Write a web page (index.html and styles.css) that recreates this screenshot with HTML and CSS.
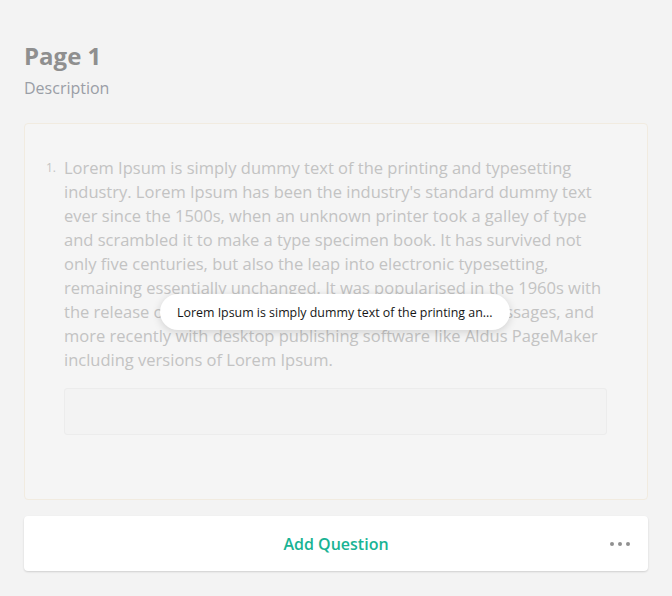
FILE: index.html
```html
<!DOCTYPE html>
<html>
<head>
<meta charset="utf-8">
<link rel="stylesheet" href="styles.css">
</head>
<body>
<div class="page">
  <div class="header">
    <h1 class="title">Page 1</h1>
    <div class="desc">Description</div>
  </div>
  <div class="panel">
    <div class="question">
      <span class="num">1.</span>
      <div class="qbody">
        <div class="qtext">Lorem Ipsum is simply dummy text of the printing and typesetting industry. Lorem Ipsum has been the industry's standard dummy text ever since the 1500s, when an unknown printer took a galley of type and scrambled it to make a type specimen book. It has survived not only five centuries, but also the leap into electronic typesetting, remaining essentially unchanged. It was popularised in the 1960s with the release of Letraset sheets containing Lorem Ipsum passages, and more recently with desktop publishing software like Aldus PageMaker including versions of Lorem Ipsum.</div>
        <div class="input"></div>
      </div>
    </div>
  </div>
  <div class="add">
    <span class="add-label">Add Question</span>
    <span class="dots"><i></i><i></i><i></i></span>
  </div>
  <div class="tooltip">Lorem Ipsum is simply dummy text of the printing an...</div>
</div>
</body>
</html>
```
FILE: styles.css
```css
html, body {
  margin: 0;
  padding: 0;
  background: #f3f3f3;
  font-family: "Open Sans", "Liberation Sans", sans-serif;
}
.page {
  position: relative;
  width: 672px;
  height: 596px;
  box-sizing: border-box;
  padding: 40px 24px 0 24px;
}
.header {
  padding-bottom: 24px;
}
.title {
  margin: 0;
  font-size: 24px;
  line-height: 32px;
  font-weight: 700;
  color: #8f8f8f;
}
.desc {
  margin-top: 5px;
  font-size: 16px;
  line-height: 22px;
  color: #9a9ea6;
}
.panel {
  height: 377px;
  box-sizing: border-box;
  background: #f5f5f5;
  border: 1px solid #f1ebe0;
  border-radius: 4px;
  padding: 32px 40px 0 21px;
}
.question {
  display: flex;
  align-items: flex-start;
}
.num {
  width: 18px;
  font-size: 12px;
  line-height: 24px;
  color: #c4c4c4;
}
.qbody {
  flex: 1;
}
.qtext {
  font-size: 16.5px;
  line-height: 24px;
  color: #c3c3c3;
}
.input {
  margin-top: 16px;
  height: 47px;
  box-sizing: border-box;
  background: #f3f3f3;
  border: 1px solid #ececec;
  border-radius: 3px;
}
.add {
  margin-top: 16px;
  height: 55px;
  background: #fff;
  border-radius: 4px;
  box-shadow: 0 1px 2px rgba(0,0,0,0.15);
  display: flex;
  align-items: center;
  justify-content: center;
  position: relative;
}
.add-label {
  font-size: 16px;
  font-weight: 600;
  color: #19b394;
}
.dots {
  position: absolute;
  right: 18px;
  top: 26px;
  display: flex;
  gap: 4px;
}
.dots i {
  display: block;
  width: 4px;
  height: 4px;
  border-radius: 50%;
  background: #909090;
}
.tooltip {
  position: absolute;
  left: 160px;
  top: 294px;
  height: 36px;
  box-sizing: border-box;
  padding: 0 17px;
  display: flex;
  align-items: center;
  background: #fff;
  border-radius: 18px;
  box-shadow: 0 2px 8px rgba(0,0,0,0.15);
  font-size: 12.4px;
  color: #161616;
  white-space: nowrap;
}
```
